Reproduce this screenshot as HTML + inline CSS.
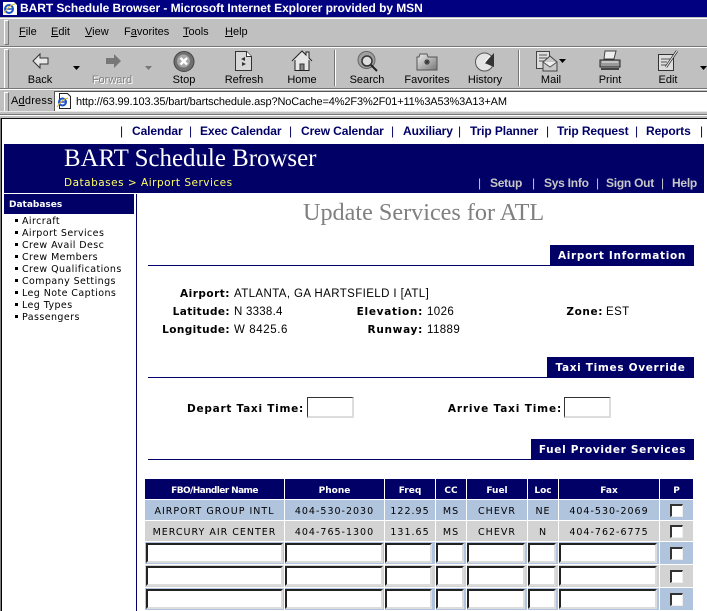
<!DOCTYPE html>
<html><head><meta charset="utf-8"><title>BART Schedule Browser</title>
<style>
html,body{margin:0;padding:0;background:#fff}
#p{position:relative;width:707px;height:611px;overflow:hidden;background:#fff;font-family:"Liberation Sans",sans-serif}
#p div,#p svg,#p span.t{position:absolute}
.t{white-space:nowrap;line-height:14px;height:14px}
.c{transform:translateX(-50%)}
.r{transform:translateX(-100%)}
.tb{font:11px/14px "Liberation Sans",sans-serif;color:#000}
.nv{font:bold 12px/14px "Liberation Sans",sans-serif;color:#000066;letter-spacing:-.1px}
.sv{font:bold 12px/14px "Liberation Sans",sans-serif;color:#c8c8c8;letter-spacing:-.25px}
.vb{font:bold 10.5px/14px "DejaVu Sans",sans-serif;color:#000;letter-spacing:.4px}
.v{font:11.5px/14px "Liberation Sans",sans-serif;color:#000;letter-spacing:.4px}
.sd{font:9.5px/12px "DejaVu Sans",sans-serif;color:#000;letter-spacing:.42px}
.tab{background:#000066;color:#fff;font:bold 10.5px/22px "DejaVu Sans",sans-serif;letter-spacing:.68px;text-align:center;height:20px;overflow:hidden}
.th{background:#000066;color:#fff;font:bold 9px/24px "DejaVu Sans",sans-serif;text-align:center;height:20px;overflow:hidden}
.td{font:9.5px/24px "DejaVu Sans",sans-serif;color:#000;text-align:center;height:20px;letter-spacing:1px;white-space:nowrap}
.in{background:#fff;box-sizing:border-box;border:2px solid;border-color:#222 #dcdcdc #dcdcdc #222;height:20px}
.cb{background:#fff;box-sizing:border-box;border-style:solid;border-width:2px 1px 1px 2px;border-color:#333 #eee #eee #333;width:13px;height:13px;left:670px}
.hd{width:3px;background:#c0c0c0;border:1px solid;border-color:#fff #777 #777 #fff;left:4px;box-sizing:content-box}
</style></head><body><div id="p">

<!-- window chrome -->
<div style="left:0;top:0;width:707px;height:118px;background:#c0c0c0"></div>
<div style="left:0;top:0;width:707px;height:17px;background:#000080"></div>
<svg style="left:2px;top:1px" width="16" height="15" viewBox="0 0 16 15"><path d="M1 1h11l3 3v10H1z" fill="#fff"/><circle cx="7" cy="8" r="4" fill="none" stroke="#1c50c8" stroke-width="2"/><path d="M3 8h8" stroke="#1c50c8" stroke-width="1.5"/><path d="M2 12q5 -8 11 -9" fill="none" stroke="#e0c020"/></svg>
<span class="t" style="left:20px;top:1px;font:bold 12px/15px 'Liberation Sans',sans-serif;color:#fff;letter-spacing:-.06px;text-rendering:geometricPrecision">BART Schedule Browser - Microsoft Internet Explorer provided by MSN</span>
<div style="left:0;top:17px;width:707px;height:1px;background:#c0c0c0"></div>
<div style="left:0;top:18px;width:707px;height:1px;background:#fff"></div>

<!-- menu bar -->
<div class="hd" style="top:20px;height:23px"></div>
<span class="t tb" style="left:19px;top:25px"><u>F</u>ile</span>
<span class="t tb" style="left:51px;top:25px"><u>E</u>dit</span>
<span class="t tb" style="left:85px;top:25px"><u>V</u>iew</span>
<span class="t tb" style="left:124px;top:25px">F<u>a</u>vorites</span>
<span class="t tb" style="left:183px;top:25px"><u>T</u>ools</span>
<span class="t tb" style="left:225px;top:25px"><u>H</u>elp</span>
<div style="left:0;top:46px;width:707px;height:1px;background:#777"></div>
<div style="left:0;top:47px;width:707px;height:1px;background:#fff"></div>

<!-- toolbar -->
<div class="hd" style="top:49px;height:38px"></div>
<svg style="left:30px;top:52px" width="20" height="18" viewBox="0 0 20 18"><path d="M3 9l7-7v4h8v6h-8v4z" fill="#e8e8e8" stroke="#333"/></svg>
<svg style="left:103px;top:52px" width="20" height="18" viewBox="0 0 20 18"><path d="M18 9l-7-7v4H3v6h8v4z" fill="#777"/></svg>
<svg style="left:173px;top:51px" width="22" height="21" viewBox="0 0 22 21"><circle cx="11" cy="10.500" r="10" fill="#707070" stroke="#444"/><circle cx="10.500" cy="10" r="6.500" fill="#a8a8a8"/><path d="M7.500 7l6.500 6.500M14 7l-6.500 6.500" stroke="#fff" stroke-width="2.500"/></svg>
<svg style="left:234px;top:50px" width="19" height="22" viewBox="0 0 19 22"><path d="M1.500 1.500h11l5 5v14h-16z" fill="#d8d8d8" stroke="#333"/><path d="M12.500 1.500v5h5" fill="#fff" stroke="#333"/><path d="M7 9l4-2v4zM12 14l-4 2v-4z" fill="#333"/></svg>
<svg style="left:291px;top:50px" width="22" height="22" viewBox="0 0 22 22"><path d="M1 11L11 1l4 4V2h3v6l3 3" fill="#e4e4e4" stroke="#222"/><path d="M4 10v10.500h14V10" fill="#e8e8e8" stroke="#222"/><path d="M9 20v-6h4v6" fill="#888" stroke="#333"/></svg>
<div style="left:334px;top:50px;width:1px;height:36px;background:#777"></div>
<div style="left:335px;top:50px;width:1px;height:36px;background:#fff"></div>
<svg style="left:357px;top:51px" width="22" height="22" viewBox="0 0 22 22"><circle cx="9.500" cy="9" r="8.500" fill="#a0a0a0" stroke="#666"/><circle cx="10" cy="10" r="5" fill="#ddd" stroke="#333" stroke-width="1.500"/><path d="M14 14l6 6" stroke="#222" stroke-width="2"/></svg>
<svg style="left:416px;top:52px" width="22" height="19" viewBox="0 0 22 19"><defs><linearGradient id="g" x1="0" y1="0" x2="1" y2="1"><stop offset="0" stop-color="#eee"/><stop offset="1" stop-color="#777"/></linearGradient></defs><path d="M1 5h2l1-3h7l1 3h9v13H1z" fill="url(#g)" stroke="#555"/><path d="M11 7v6M8 10h6M9 8l4 4M13 8l-4 4" stroke="#333"/></svg>
<svg style="left:474px;top:51px" width="22" height="21" viewBox="0 0 22 21"><circle cx="10.500" cy="11" r="9" fill="#e4e4e4" stroke="#555"/><path d="M10.500 12L20 2v14z" fill="#333"/><path d="M10.500 12L16 5" stroke="#fff"/></svg>
<div style="left:518px;top:50px;width:1px;height:36px;background:#777"></div>
<div style="left:519px;top:50px;width:1px;height:36px;background:#fff"></div>
<svg style="left:535px;top:50px" width="24" height="22" viewBox="0 0 24 22"><path d="M1.500 1.500h13v17h-13z" fill="#ddd" stroke="#444"/><path d="M4 5h8M4 8h8M4 11h5" stroke="#555"/><path d="M8 12l7-6 7 6v9H8z" fill="#c8c8c8" stroke="#444"/><path d="M8 12l7 5 7-5" fill="#eee" stroke="#555"/></svg>
<svg style="left:599px;top:50px" width="22" height="22" viewBox="0 0 22 22"><path d="M6 1h11l-2 8H5z" fill="#eee" stroke="#444"/><path d="M1 10h20v7H1z" fill="#999" stroke="#222"/><path d="M2 18h18v2H2z" fill="#444"/><path d="M3 12h16" stroke="#eee"/></svg>
<svg style="left:657px;top:50px" width="22" height="22" viewBox="0 0 22 22"><path d="M1.500 4.500h15v16h-15z" fill="#ddd" stroke="#333"/><path d="M4 9h9M4 12h6M4 15h5" stroke="#555"/><path d="M9 17L20 1" stroke="#333" stroke-width="2.500"/><path d="M9 17L20 1" stroke="#eee"/></svg>
<span class="t tb c" style="left:40px;top:73px">Back</span>
<span class="t tb c" style="left:112px;top:73px;color:#808080;text-shadow:1px 1px 0 #fff">Forward</span>
<span class="t tb c" style="left:184px;top:73px">Stop</span>
<span class="t tb c" style="left:244px;top:73px">Refresh</span>
<span class="t tb c" style="left:302px;top:73px">Home</span>
<span class="t tb c" style="left:367px;top:73px">Search</span>
<span class="t tb c" style="left:427px;top:73px">Favorites</span>
<span class="t tb c" style="left:485px;top:73px">History</span>
<span class="t tb c" style="left:551px;top:73px">Mail</span>
<span class="t tb c" style="left:610px;top:73px">Print</span>
<span class="t tb c" style="left:668px;top:73px">Edit</span>
<svg style="left:73px;top:66px" width="7" height="4"><path d="M0 0h7L3.500 4z" fill="#000"/></svg>
<svg style="left:145px;top:66px" width="7" height="4"><path d="M0 0h7L3.500 4z" fill="#777"/></svg>
<svg style="left:559px;top:59px" width="7" height="4"><path d="M0 0h7L3.500 4z" fill="#000"/></svg>
<svg style="left:700px;top:66px" width="7" height="4"><path d="M0 0h7L3.500 4z" fill="#000"/></svg>
<div style="left:0;top:88px;width:707px;height:1px;background:#777"></div>
<div style="left:0;top:89px;width:707px;height:1px;background:#fff"></div>

<!-- address bar -->
<div class="hd" style="top:92px;height:18px"></div>
<span class="t tb" style="left:11px;top:94px;letter-spacing:.2px">A<u>d</u>dress</span>
<div style="left:54px;top:91px;width:653px;height:20px;background:#fff;box-sizing:border-box;border-top:1px solid #555;border-left:1px solid #555"></div>
<svg style="left:56px;top:93px" width="16" height="16" viewBox="0 0 16 16"><path d="M3.500.5h8l3 3v12h-11z" fill="#fff" stroke="#222"/><circle cx="6.500" cy="9" r="3.500" fill="none" stroke="#1c50c8" stroke-width="2"/><path d="M3 9h7" stroke="#1c50c8" stroke-width="1.500"/><path d="M1 14q5-8 11-9" fill="none" stroke="#d8b020"/></svg>
<span class="t" style="left:76px;top:95px;font:11px/14px 'Liberation Sans',sans-serif;color:#000;letter-spacing:-.125px;text-rendering:geometricPrecision">http://63.99.103.35/bart/bartschedule.asp?NoCache=4%2F3%2F01+11%3A53%3A13+AM</span>
<div style="left:0;top:111px;width:707px;height:1px;background:#e8e8e8"></div>
<div style="left:0;top:114px;width:707px;height:1px;background:#777"></div>
<div style="left:0;top:115px;width:707px;height:1px;background:#fff"></div>

<!-- frame -->
<div style="left:0;top:116px;width:707px;height:2px;background:#c0c0c0"></div>
<div style="left:0;top:118px;width:707px;height:1px;background:#111"></div>
<div style="left:0;top:118px;width:1px;height:493px;background:#808080"></div>
<div style="left:1px;top:118px;width:1px;height:493px;background:#000"></div>

<!-- top nav -->
<span class="t nv" style="left:120px;top:124px;font-weight:normal">|</span>
<span class="t nv" style="left:132px;top:124px">Calendar</span>
<span class="t nv" style="left:189px;top:124px;font-weight:normal">|</span>
<span class="t nv" style="left:200px;top:124px">Exec Calendar</span>
<span class="t nv" style="left:289px;top:124px;font-weight:normal">|</span>
<span class="t nv" style="left:301px;top:124px">Crew Calendar</span>
<span class="t nv" style="left:391px;top:124px;font-weight:normal">|</span>
<span class="t nv" style="left:403px;top:124px">Auxiliary</span>
<span class="t nv" style="left:458px;top:124px;font-weight:normal">|</span>
<span class="t nv" style="left:470px;top:124px">Trip Planner</span>
<span class="t nv" style="left:546px;top:124px;font-weight:normal">|</span>
<span class="t nv" style="left:557px;top:124px">Trip Request</span>
<span class="t nv" style="left:635px;top:124px;font-weight:normal">|</span>
<span class="t nv" style="left:646px;top:124px">Reports</span>
<span class="t nv" style="left:700px;top:124px;font-weight:normal">|</span>

<!-- banner -->
<div style="left:4px;top:144px;width:700px;height:49px;background:#000066"></div>
<span class="t" style="left:64px;top:145px;height:28px;font:24.900px/28px 'Liberation Serif',serif;color:#fff">BART Schedule Browser</span>
<span class="t" style="left:64px;top:176px;font:10.500px/14px 'DejaVu Sans',sans-serif;color:#ffff66;letter-spacing:.5px">Databases &gt; Airport Services</span>
<span class="t sv" style="left:478px;top:176px;font-weight:normal">|</span>
<span class="t sv" style="left:490px;top:176px">Setup</span>
<span class="t sv" style="left:532px;top:176px;font-weight:normal">|</span>
<span class="t sv" style="left:544px;top:176px">Sys Info</span>
<span class="t sv" style="left:596px;top:176px;font-weight:normal">|</span>
<span class="t sv" style="left:606px;top:176px">Sign Out</span>
<span class="t sv" style="left:661px;top:176px;font-weight:normal">|</span>
<span class="t sv" style="left:672px;top:176px">Help</span>

<!-- sidebar -->
<div style="left:4px;top:194px;width:130px;height:20px;background:#000066"></div>
<span class="t" style="left:9px;top:198px;font:bold 9px/15px 'DejaVu Sans',sans-serif;color:#fff">Databases</span>
<div style="left:136px;top:194px;width:1px;height:417px;background:#000066"></div>
<div style="left:15px;top:219px;width:3px;height:3px;background:#000"></div><span class="t sd" style="left:22px;top:216px">Aircraft</span>
<div style="left:15px;top:231px;width:3px;height:3px;background:#000"></div><span class="t sd" style="left:22px;top:228px">Airport Services</span>
<div style="left:15px;top:243px;width:3px;height:3px;background:#000"></div><span class="t sd" style="left:22px;top:240px">Crew Avail Desc</span>
<div style="left:15px;top:255px;width:3px;height:3px;background:#000"></div><span class="t sd" style="left:22px;top:252px">Crew Members</span>
<div style="left:15px;top:267px;width:3px;height:3px;background:#000"></div><span class="t sd" style="left:22px;top:264px">Crew Qualifications</span>
<div style="left:15px;top:279px;width:3px;height:3px;background:#000"></div><span class="t sd" style="left:22px;top:276px">Company Settings</span>
<div style="left:15px;top:291px;width:3px;height:3px;background:#000"></div><span class="t sd" style="left:22px;top:288px">Leg Note Captions</span>
<div style="left:15px;top:303px;width:3px;height:3px;background:#000"></div><span class="t sd" style="left:22px;top:300px">Leg Types</span>
<div style="left:15px;top:315px;width:3px;height:3px;background:#000"></div><span class="t sd" style="left:22px;top:312px">Passengers</span>

<!-- heading -->
<span class="t" style="left:303px;top:199px;height:28px;font:24.200px/28px 'Liberation Serif',serif;color:#808080">Update Services for ATL</span>

<!-- sections -->
<div style="left:148px;top:265px;width:546px;height:1px;background:#000066"></div>
<div class="tab" style="left:550px;top:245px;width:144px">Airport Information</div>
<div style="left:148px;top:377px;width:546px;height:1px;background:#000066"></div>
<div class="tab" style="left:547px;top:357px;width:147px">Taxi Times Override</div>
<div style="left:148px;top:459px;width:546px;height:1px;background:#000066"></div>
<div class="tab" style="left:531px;top:439px;width:163px">Fuel Provider Services</div>

<!-- airport info -->
<span class="t vb r" style="left:230px;top:287px;letter-spacing:.5px">Airport:</span><span class="t v" style="left:234px;top:287px">ATLANTA, GA HARTSFIELD I [ATL]</span>
<span class="t vb r" style="left:230px;top:305px">Latitude:</span><span class="t v" style="left:234px;top:305px;letter-spacing:.25px">N 3338.4</span>
<span class="t vb r" style="left:230px;top:323px">Longitude:</span><span class="t v" style="left:234px;top:323px;letter-spacing:.6px">W 8425.6</span>
<span class="t vb r" style="left:423px;top:305px;letter-spacing:.7px">Elevation:</span><span class="t v" style="left:427px;top:305px">1026</span>
<span class="t vb r" style="left:423px;top:323px;letter-spacing:.7px">Runway:</span><span class="t v" style="left:427px;top:323px">11889</span>
<span class="t vb r" style="left:603px;top:305px;letter-spacing:.6px">Zone:</span><span class="t v" style="left:606px;top:305px">EST</span>

<!-- taxi -->
<span class="t vb r" style="left:304px;top:402px;letter-spacing:.75px">Depart Taxi Time:</span>
<div class="in" style="left:307px;top:397px;width:47px;height:21px;border-width:1px 2px 2px 1px;border-color:#333 #ddd #ddd #333"></div>
<span class="t vb r" style="left:562px;top:402px;letter-spacing:.85px">Arrive Taxi Time:</span>
<div class="in" style="left:564px;top:397px;width:47px;height:21px;border-width:1px 2px 2px 1px;border-color:#333 #ddd #ddd #333"></div>

<!-- table header -->
<div class="th" style="left:145px;top:479px;width:139px;letter-spacing:-.6px">FBO/Handler Name</div>
<div class="th" style="left:285px;top:479px;width:99px">Phone</div>
<div class="th" style="left:385px;top:479px;width:50px">Freq</div>
<div class="th" style="left:436px;top:479px;width:30px">CC</div>
<div class="th" style="left:467px;top:479px;width:60px">Fuel</div>
<div class="th" style="left:528px;top:479px;width:30px">Loc</div>
<div class="th" style="left:559px;top:479px;width:100px">Fax</div>
<div class="th" style="left:660px;top:479px;width:33px">P</div>

<!-- rows -->
<div style="left:145px;top:500px;width:548px;height:20px;background:#b0c4de"></div>
<div style="left:145px;top:521px;width:548px;height:20px;background:#d3d3d3"></div>
<div style="left:145px;top:542px;width:548px;height:22px;background:#b0c4de"></div>
<div style="left:145px;top:565px;width:548px;height:22px;background:#d3d3d3"></div>
<div style="left:145px;top:588px;width:548px;height:22px;background:#b0c4de"></div>
<div style="left:284px;top:500px;width:1px;height:111px;background:#fff"></div>
<div style="left:384px;top:500px;width:1px;height:111px;background:#fff"></div>
<div style="left:435px;top:500px;width:1px;height:111px;background:#fff"></div>
<div style="left:466px;top:500px;width:1px;height:111px;background:#fff"></div>
<div style="left:527px;top:500px;width:1px;height:111px;background:#fff"></div>
<div style="left:558px;top:500px;width:1px;height:111px;background:#fff"></div>
<div style="left:659px;top:500px;width:1px;height:111px;background:#fff"></div>

<div class="td" style="left:145px;top:500px;width:139px">AIRPORT GROUP INTL</div>
<div class="td" style="left:285px;top:500px;width:99px">404-530-2030</div>
<div class="td" style="left:385px;top:500px;width:50px">122.95</div>
<div class="td" style="left:436px;top:500px;width:30px">MS</div>
<div class="td" style="left:467px;top:500px;width:60px">CHEVR</div>
<div class="td" style="left:528px;top:500px;width:30px">NE</div>
<div class="td" style="left:559px;top:500px;width:100px">404-530-2069</div>
<div class="cb" style="top:504px"></div>

<div class="td" style="left:145px;top:521px;width:139px">MERCURY AIR CENTER</div>
<div class="td" style="left:285px;top:521px;width:99px">404-765-1300</div>
<div class="td" style="left:385px;top:521px;width:50px">131.65</div>
<div class="td" style="left:436px;top:521px;width:30px">MS</div>
<div class="td" style="left:467px;top:521px;width:60px">CHEVR</div>
<div class="td" style="left:528px;top:521px;width:30px">N</div>
<div class="td" style="left:559px;top:521px;width:100px">404-762-6775</div>
<div class="cb" style="top:525px"></div>

<!-- input rows -->
<div class="in" style="left:146px;top:543px;width:137px"></div><div class="in" style="left:285px;top:543px;width:98px"></div><div class="in" style="left:385px;top:543px;width:47px"></div><div class="in" style="left:436px;top:543px;width:28px"></div><div class="in" style="left:467px;top:543px;width:58px"></div><div class="in" style="left:528px;top:543px;width:28px"></div><div class="in" style="left:559px;top:543px;width:98px"></div><div class="cb" style="top:547px"></div>
<div class="in" style="left:146px;top:566px;width:137px"></div><div class="in" style="left:285px;top:566px;width:98px"></div><div class="in" style="left:385px;top:566px;width:47px"></div><div class="in" style="left:436px;top:566px;width:28px"></div><div class="in" style="left:467px;top:566px;width:58px"></div><div class="in" style="left:528px;top:566px;width:28px"></div><div class="in" style="left:559px;top:566px;width:98px"></div><div class="cb" style="top:570px"></div>
<div class="in" style="left:146px;top:589px;width:137px"></div><div class="in" style="left:285px;top:589px;width:98px"></div><div class="in" style="left:385px;top:589px;width:47px"></div><div class="in" style="left:436px;top:589px;width:28px"></div><div class="in" style="left:467px;top:589px;width:58px"></div><div class="in" style="left:528px;top:589px;width:28px"></div><div class="in" style="left:559px;top:589px;width:98px"></div><div class="cb" style="top:593px"></div>

</div></body></html>
